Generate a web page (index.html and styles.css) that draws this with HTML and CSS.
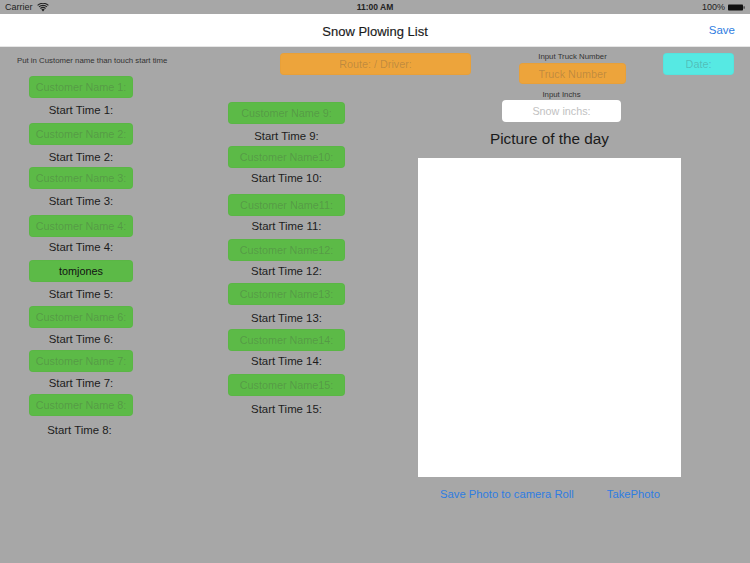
FILE: index.html
```html
<!DOCTYPE html>
<html lang="en">
<head>
<meta charset="utf-8">
<title>Snow Plowing List</title>
<link rel="stylesheet" href="styles.css">
</head>
<body>
<div class="app">
  <header class="status">
    <div class="status-left">
      <span>Carrier</span>
      <svg class="wifi" width="12" height="9" viewBox="0 0 12 9"><path d="M6 8.6 4.3 6.6a2.5 2.5 0 0 1 3.4 0Z" fill="#222"/><path d="M3.4 5.5a3.9 3.9 0 0 1 5.2 0" fill="none" stroke="#222" stroke-width="1.1"/><path d="M2 3.9a5.9 5.9 0 0 1 8 0" fill="none" stroke="#222" stroke-width="1.1"/><path d="M.6 2.4a7.9 7.9 0 0 1 10.8 0" fill="none" stroke="#222" stroke-width="1.1"/></svg>
    </div>
    <div class="status-time">11:00 AM</div>
    <div class="status-right">
      <span>100%</span>
      <svg width="17" height="7" viewBox="0 0 17 7"><rect x="0" y="0.5" width="15" height="6" rx="0.8" fill="#111"/><rect x="15.5" y="2.3" width="1.2" height="2.4" fill="#333"/></svg>
    </div>
  </header>
  <nav class="navbar">
    <h1 class="nav-title">Snow Plowing List</h1>
    <a class="nav-save">Save</a>
  </nav>
  <main class="content">
    <section class="col-one">
      <p class="caption hint">Put in Customer name than touch start time</p>
      <div class="field green wide-1 placeholder">Customer Name 1:</div><div class="time">Start Time 1:</div>
      <div class="field green wide-1 placeholder">Customer Name 2:</div><div class="time">Start Time 2:</div>
      <div class="field green wide-1 placeholder">Customer Name 3:</div><div class="time">Start Time 3:</div>
      <div class="field green wide-1 placeholder">Customer Name 4:</div><div class="time">Start Time 4:</div>
      <div class="field green wide-1">tomjones</div><div class="time">Start Time 5:</div>
      <div class="field green wide-1 placeholder">Customer Name 6:</div><div class="time">Start Time 6:</div>
      <div class="field green wide-1 placeholder">Customer Name 7:</div><div class="time">Start Time 7:</div>
      <div class="field green wide-1 placeholder">Customer Name 8:</div><div class="time">Start Time 8:</div>
    </section>
    <section class="rest">
      <div class="top-row">
        <div class="field orange route placeholder">Route: / Driver:</div>
        <div class="truck">
          <p class="caption">Input Truck Number</p>
          <div class="field orange truck-field placeholder">Truck Number</div>
        </div>
        <div class="field cyan date placeholder">Date:</div>
      </div>
      <div class="lower">
        <div class="col-two">
          <div class="field green wide-2 placeholder">Customer Name 9:</div><div class="time">Start Time 9:</div>
          <div class="field green wide-2 placeholder">Customer Name10:</div><div class="time">Start Time 10:</div>
          <div class="field green wide-2 placeholder">Customer Name11:</div><div class="time">Start Time 11:</div>
          <div class="field green wide-2 placeholder">Customer Name12:</div><div class="time">Start Time 12:</div>
          <div class="field green wide-2 placeholder">Customer Name13:</div><div class="time">Start Time 13:</div>
          <div class="field green wide-2 placeholder">Customer Name14:</div><div class="time">Start Time 14:</div>
          <div class="field green wide-2 placeholder">Customer Name15:</div><div class="time">Start Time 15:</div>
        </div>
        <div class="photo-panel">
          <div class="inches">
            <p class="caption">Input Inchs</p>
            <div class="field white-field placeholder">Snow inchs:</div>
          </div>
          <h2 class="photo-title">Picture of the day</h2>
          <div class="photo"></div>
          <div class="photo-actions">
            <a class="link">Save Photo to camera Roll</a>
            <a class="link">TakePhoto</a>
          </div>
        </div>
      </div>
    </section>
  </main>
</div>
</body>
</html>
```
FILE: styles.css
```css
* { box-sizing: border-box; }
html, body { margin: 0; padding: 0; }
body { width: 750px; height: 563px; overflow: hidden; font-family: "Liberation Sans", Arial, sans-serif; color: #1a1a1a; background: #a7a7a7; }
.app { width: 750px; height: 563px; display: flex; flex-direction: column; }
p, h1, h2 { margin: 0; font-weight: normal; }

.status { height: 14px; display: grid; grid-template-columns: 1fr auto 1fr; align-items: center; padding: 0 5px; font-size: 9px; color: #222; }
.status-left { display: flex; align-items: center; gap: 4px; }
.status-time { font-weight: bold; font-size: 8.5px; }
.status-right { display: flex; justify-content: flex-end; align-items: center; gap: 3px; }

.navbar { height: 33px; background: #fff; border-bottom: 1px solid #e6e6e6; display: flex; align-items: center; justify-content: center; position: relative; padding-top: 2px; }
.nav-title { font-size: 13px; color: #1a1a1a; -webkit-text-stroke: 0.15px #1a1a1a; }
.nav-save { position: absolute; right: 15px; top: 10px; font-size: 11.5px; color: #2f7de1; }

.content { flex: 1; display: flex; align-items: flex-start; }
.col-one { width: 162px; padding-top: 8px; display: grid; grid-template-columns: 162px; justify-items: center; align-items: center; grid-template-rows: 21px 22px 25px 22px 22px 22px 26px 22px 23px 22px 24px 22px 22px 22px 22px 22px 30px; }
.col-one .hint { justify-self: start; align-self: start; margin: 1px 0 0 17px; white-space: nowrap; }

.caption { font-size: 7.8px; color: #333; text-align: center; }
.field { height: 22px; border-radius: 4px; border: 1px solid rgba(0, 0, 0, 0.02); display: flex; align-items: center; justify-content: center; font-size: 10.8px; color: #111; }
.placeholder { color: rgba(70, 70, 70, 0.28); }
.green { background: #5cba47; }
.orange { background: #eda43b; }
.cyan { background: #56e9e3; }
.white-field { background: #fff; width: 119px; color: #c2c2c2; border: 0; }
.wide-1 { width: 104px; }
.wide-2 { width: 117px; }
.time { font-size: 11.4px; line-height: 13px; color: #1c1c1c; white-space: nowrap; }
.col-one .time:nth-child(5) { margin-top: 3px; }
.col-one .time:nth-child(7) { margin-top: -2px; }
.col-one .time:nth-child(9) { margin-top: -3px; }
.col-one .time:nth-child(17) { margin: -2px 3px 0 0; }

.rest { flex: 1; display: flex; flex-direction: column; margin-left: 66px; }
.top-row { display: flex; align-items: flex-start; height: 38px; }
.route { width: 191px; margin: 6px 0 0 52px; }
.truck { width: 107px; margin: 5px 0 0 48px; display: flex; flex-direction: column; align-items: center; gap: 2px; }
.truck-field { width: 107px; height: 21px; }
.date { width: 71px; margin: 6px 0 0 37px; }

.lower { display: flex; align-items: flex-start; }
.col-two { width: 117px; padding-top: 17px; display: grid; grid-template-columns: 117px; justify-items: center; grid-template-rows: 22px 22px 22px 26px 22px 23px 22px 22px 22px 24px 22px 23px 22px 26px; }
.col-two .time { margin-top: 4px; }
.col-two .time:nth-child(2) { margin-top: 6px; }
.col-two .time:nth-child(10), .col-two .time:nth-child(14) { margin-top: 7px; }

.photo-panel { width: 263px; margin-left: 73px; display: flex; flex-direction: column; }
.inches { width: 119px; margin: 5px 0 0 84px; display: flex; flex-direction: column; align-items: center; gap: 1px; }
.photo-title { font-size: 15.3px; color: #1a1a1a; text-align: center; margin-top: 8px; line-height: 18px; }
.photo { height: 319px; background: #fff; margin-top: 10px; }
.photo-actions { display: flex; margin-top: 11px; padding-left: 22px; gap: 33px; }
.link { font-size: 11.25px; color: #2f7de1; }
```
